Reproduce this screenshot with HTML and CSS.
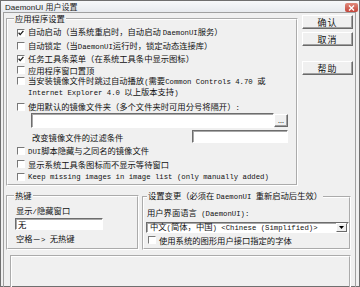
FILE: index.html
```html
<!DOCTYPE html>
<html lang="zh-CN">
<head>
  <meta charset="UTF-8" />
  <meta name="viewport" content="width=device-width, initial-scale=1.0"/>
  <title>DaemonUI 用户设置</title>
  <link rel="stylesheet" href="styles.css">
</head>
<body>

<div class="window">
  <div class="titlebar">
    <span class="title">DaemonUI 用户设置</span>
    <span class="close">
      <svg width="7" height="6" viewBox="0 0 7 6"><path d="M1 0.5 L6 5.5 M6 0.5 L1 5.5" stroke="#fff" stroke-width="1.4"/></svg>
    </span>
  </div>

  <div class="client">
    <div class="top">
      <!-- 应用程序设置 -->
      <fieldset class="group app">
        <legend>应用程序设置</legend>
        <div class="group-body app-body">
          <label class="check"><i class="box"><svg width="6" height="6" viewBox="0 0 6 6"><path d="M0.6 2.8 L2.2 4.6 L5.4 0.8" fill="none" stroke="#1a1a1a" stroke-width="1.3"/></svg></i><span>自动启动（当系统重启时，自动启动 <span class="en">DaemonUI</span>服务）</span></label>
          <label class="check"><i class="box"></i><span>自动锁定（当<span class="en">DaemonUI</span>运行时，锁定动态连接库）</span></label>
          <label class="check"><i class="box"><svg width="6" height="6" viewBox="0 0 6 6"><path d="M0.6 2.8 L2.2 4.6 L5.4 0.8" fill="none" stroke="#1a1a1a" stroke-width="1.3"/></svg></i><span>任务工具条菜单（在系统工具条中显示图标）</span></label>
          <label class="check"><i class="box"></i><span>应用程序窗口置顶</span></label>
          <label class="check two-line"><i class="box"></i><span>当安装镜像文件时跳过自动播放<span class="en">(</span>需要<span class="en">Common Controls 4.70 </span>或<br><span class="en">Internet Explorer 4.0 </span>以上版本支持<span class="en">)</span></span></label>
          <label class="check short"><i class="box"></i><span>使用默认的镜像文件夹（多个文件夹时可用分号将隔开）<span class="en">:</span></span></label>
          <div class="path-row">
            <input class="field" type="text" value="">
            <button class="btn dots">...</button>
          </div>
          <div class="filter-row">
            <span>改变镜像文件的过滤条件</span>
            <input class="field filter" type="text" value="">
          </div>
          <label class="check tall"><i class="box"></i><span><span class="en">DUI</span>脚本隐藏与之同名的镜像文件</span></label>
          <label class="check tall"><i class="box"></i><span>显示系统工具条图标而不显示等待窗口</span></label>
          <label class="check tall"><i class="box"></i><span class="en">Keep missing images in image list (only manually added)</span></label>
        </div>
      </fieldset>

      <div class="buttons">
        <button class="btn">确认</button>
        <button class="btn">取消</button>
        <button class="btn help">帮助</button>
      </div>
    </div>

    <div class="bottom-row">
      <!-- 热键 -->
      <fieldset class="group hotkey">
        <legend>热键</legend>
        <div class="group-body hotkey-body">
          <div class="line">显示<span class="en">/</span>隐藏窗口</div>
          <input class="field key" type="text" value="无">
          <div class="line hint">空格－<span class="en">&gt; </span>无热键</div>
        </div>
      </fieldset>

      <!-- 设置变更 -->
      <fieldset class="group lang">
        <legend>设置变更（必须在 <span class="en">DaemonUI </span>重新启动后生效）</legend>
        <div class="group-body lang-body">
          <div class="line">用户界面语言<span class="en"> (DaemonUI):</span></div>
          <div class="combo">
            <span class="combo-text">中文<span class="en">(</span>简体，中国<span class="en">) &lt;Chinese (Simplified)&gt;</span></span>
            <span class="combo-arrow"><svg width="5" height="3" viewBox="0 0 5 3"><path d="M0 0 H5 L2.5 3 Z" fill="#000"/></svg></span>
          </div>
          <label class="check lang-check"><i class="box"></i><span>使用系统的图形用户接口指定的字体</span></label>
        </div>
      </fieldset>
    </div>

    <div class="panel"></div>
  </div>
</div>

</body>
</html>
```

FILE: styles.css
```css
* {
  box-sizing: border-box;
}

body {
  margin: 0;
  font-family: "Noto Sans CJK SC", sans-serif;
  font-size: 8.3px;
  color: #111;
  background: #fff;
}

.en {
  font-family: "Liberation Mono", monospace;
  font-size: 7.3px;
}

.window {
  width: 360px;
  height: 287px;
  border: 1px solid #6f6f6f;
  background: #f0f0f0;
  display: flex;
  flex-direction: column;
}

.titlebar {
  height: 14px;
  display: flex;
  align-items: center;
  padding: 0 1px 0 4px;
  background: linear-gradient(#f7f8fa, #e7eaee);
  font-family: "Liberation Sans", "Noto Sans CJK SC", sans-serif;
  font-size: 8px;
  color: #1e1e1e;
}

.close {
  margin-left: auto;
  align-self: flex-end;
  width: 13px;
  height: 9px;
  border-radius: 2px;
  background: linear-gradient(#e08a7c, #c4453a);
  display: flex;
  align-items: center;
  justify-content: center;
}

.client {
  flex: 1;
  margin: 0 3px 3px 2px;
  border: 1px solid #a0a0a0;
  padding: 0 2px;
  display: flex;
  flex-direction: column;
}

.top {
  display: flex;
  gap: 4px;
}

.group {
  margin: 0;
  padding: 0;
  min-width: 0;
  border: 2px groove #fff;
}

.group legend {
  padding: 0 1px;
  line-height: 11px;
}

.app {
  width: 292px;
}

.app legend {
  margin-left: 6px;
}

.app-body {
  padding: 2px 8px 1px 9px;
}

.check {
  display: flex;
  align-items: center;
  line-height: 11.5px;
  white-space: nowrap;
}

.box {
  flex: none;
  width: 8px;
  height: 8px;
  margin-right: 3px;
  background: #fff;
  border-top: 1px solid #787878;
  border-left: 1px solid #787878;
  border-right: 1px solid #fff;
  border-bottom: 1px solid #fff;
  display: flex;
  align-items: center;
  justify-content: center;
}

.two-line {
  align-items: flex-start;
  line-height: 9px;
  margin-bottom: 2.5px;
}

.two-line .box {
  margin-top: 1px;
}

.short {
  line-height: 10px;
}

.tall {
  line-height: 12.5px;
}

.field {
  display: block;
  margin: 0;
  padding: 0 2px;
  font: inherit;
  background: #fff;
  border-top: 1px solid #6d6d6d;
  border-left: 1px solid #6d6d6d;
  border-right: 1px solid #fff;
  border-bottom: 1px solid #fff;
  box-shadow: inset 1px 1px #a8a8a8;
  outline: none;
}

.path-row {
  display: flex;
  height: 15px;
  margin: 0.5px 0 0 14px;
}

.path-row .field {
  flex: 1;
  height: 15px;
}

.btn {
  margin: 0;
  padding: 0;
  font: inherit;
  font-size: 9px;
  letter-spacing: 1px;
  color: #111;
  background: #f0f0f0;
  border-top: 1px solid #fff;
  border-left: 1px solid #fff;
  border-right: 1px solid #6a6a6a;
  border-bottom: 1px solid #6a6a6a;
  box-shadow: inset -1px -1px #a0a0a0;
}

.dots {
  width: 14px;
  height: 13px;
  align-self: center;
  font-size: 7px;
  letter-spacing: 0;
  line-height: 7px;
}

.filter-row {
  display: flex;
  align-items: center;
  justify-content: space-between;
  height: 14px;
  margin-top: 1.5px;
  padding-left: 15px;
}

.filter {
  width: 96px;
  height: 13px;
}

.buttons {
  width: 51px;
  display: flex;
  flex-direction: column;
  padding-top: 2px;
}

.buttons .btn {
  height: 14px;
}

.buttons .btn + .btn {
  margin-top: 3px;
}

.buttons .help {
  margin-top: 15px !important;
}

.bottom-row {
  display: flex;
  gap: 3px;
  margin-top: 4px;
  padding-right: 2px;
}

.hotkey {
  width: 133px;
}

.hotkey legend {
  margin-left: 6px;
}

.hotkey-body {
  padding: 4px 0 2px 7px;
}

.line {
  line-height: 11px;
  padding-left: 1px;
  white-space: nowrap;
}

.key {
  width: 88px;
  height: 12px;
  line-height: 10px;
}

.hint {
  margin-top: 3px;
}

.lang {
  flex: 1;
}

.lang legend {
  margin-left: 3px;
  white-space: nowrap;
}

.lang-body {
  padding: 4px 0 2px 2px;
}

.combo {
  display: flex;
  align-items: center;
  height: 11px;
  margin-top: 1.5px;
  background: #fff;
  border-top: 1px solid #6d6d6d;
  border-left: 1px solid #6d6d6d;
  border-right: 1px solid #fff;
  border-bottom: 1px solid #fff;
  box-shadow: inset 1px 1px #a8a8a8;
}

.combo-text {
  flex: 1;
  padding-left: 3px;
  line-height: 9px;
  white-space: nowrap;
}

.combo-arrow {
  width: 11px;
  height: 9px;
  margin-right: 1px;
  background: #f0f0f0;
  border-top: 1px solid #fff;
  border-left: 1px solid #fff;
  border-right: 1px solid #6a6a6a;
  border-bottom: 1px solid #6a6a6a;
  display: flex;
  align-items: center;
  justify-content: center;
}

.lang-check {
  margin-top: 2px;
  padding-left: 2px;
  line-height: 11px;
}

.panel {
  height: 36px;
  margin: 5px 2px 0 4px;
  border: 2px groove #fff;
}
```
